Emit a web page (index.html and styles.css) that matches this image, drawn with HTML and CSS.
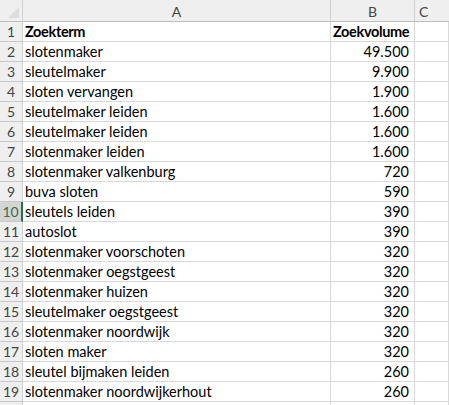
FILE: index.html
```html
<!DOCTYPE html>
<html>
<head>
<meta charset="utf-8">
<link rel="stylesheet" href="styles.css">
</head>
<body>
<div class="sheet">
  <div class="hd corner"><span class="tri"></span></div>
  <div class="hd col">A</div>
  <div class="hd col">B</div>
  <div class="hd col colc">C</div>

  <div class="hd row">1</div><div class="c b">Zoekterm</div><div class="c b">Zoekvolume</div><div class="c e"></div>
  <div class="hd row">2</div><div class="c">slotenmaker</div><div class="c n">49.500</div><div class="c e"></div>
  <div class="hd row">3</div><div class="c">sleutelmaker</div><div class="c n">9.900</div><div class="c e"></div>
  <div class="hd row">4</div><div class="c">sloten vervangen</div><div class="c n">1.900</div><div class="c e"></div>
  <div class="hd row">5</div><div class="c">sleutelmaker leiden</div><div class="c n">1.600</div><div class="c e"></div>
  <div class="hd row">6</div><div class="c">sleutelmaker leiden</div><div class="c n">1.600</div><div class="c e"></div>
  <div class="hd row">7</div><div class="c">slotenmaker leiden</div><div class="c n">1.600</div><div class="c e"></div>
  <div class="hd row">8</div><div class="c">slotenmaker valkenburg</div><div class="c n">720</div><div class="c e"></div>
  <div class="hd row">9</div><div class="c">buva sloten</div><div class="c n">590</div><div class="c e"></div>
  <div class="hd row sel">10</div><div class="c">sleutels leiden</div><div class="c n">390</div><div class="c e"></div>
  <div class="hd row">11</div><div class="c">autoslot</div><div class="c n">390</div><div class="c e"></div>
  <div class="hd row">12</div><div class="c">slotenmaker voorschoten</div><div class="c n">320</div><div class="c e"></div>
  <div class="hd row">13</div><div class="c">slotenmaker oegstgeest</div><div class="c n">320</div><div class="c e"></div>
  <div class="hd row">14</div><div class="c">slotenmaker huizen</div><div class="c n">320</div><div class="c e"></div>
  <div class="hd row">15</div><div class="c">sleutelmaker oegstgeest</div><div class="c n">320</div><div class="c e"></div>
  <div class="hd row">16</div><div class="c">slotenmaker noordwijk</div><div class="c n">320</div><div class="c e"></div>
  <div class="hd row">17</div><div class="c">sloten maker</div><div class="c n">320</div><div class="c e"></div>
  <div class="hd row">18</div><div class="c">sleutel bijmaken leiden</div><div class="c n">260</div><div class="c e"></div>
  <div class="hd row">19</div><div class="c">slotenmaker noordwijkerhout</div><div class="c n">260</div><div class="c e"></div>
  <div class="hd row"></div><div class="c"></div><div class="c n"></div><div class="c e"></div>
</div>
</body>
</html>
```
FILE: styles.css
```css
* { box-sizing: border-box; }
html, body { margin: 0; padding: 0; background: #fff; overflow: hidden; }
body { width: 449px; height: 405px; }
.sheet {
  display: grid;
  grid-template-columns: 23px 308px 84px 34px;
  grid-auto-rows: 20px;
  grid-template-rows: 22px;
  font-family: Lato, "Liberation Sans", sans-serif;
  font-size: 14.5px;
  color: #000;
  width: 449px;
}
.hd {
  background: #efefef;
  color: #444;
  border-right: 1px solid #d0d0d0;
  border-bottom: 1px solid #c8c8c8;
  display: flex;
  align-items: center;
  justify-content: center;
  font-size: 14px;
}
.corner { position: relative; border-bottom: 1px solid #bdbdbd; }
.tri {
  position: absolute;
  right: 3px;
  bottom: 3px;
  width: 0; height: 0;
  border-left: 11px solid transparent;
  border-bottom: 11px solid #dcdcdc;
}
.col { border-bottom: 1px solid #bdbdbd; padding-top: 1px; }
.colc { justify-content: flex-start; padding-left: 4px; border-right: none; }
.row { justify-content: center; }
.row.sel { background: #d5d5d5; color: #3b6e4e; border-right: 2px solid #217346; }
.c {
  border-right: 1px solid #d9d9d9;
  border-bottom: 1px solid #d9d9d9;
  padding: 0 3px 0 2px;
  display: flex;
  align-items: center;
  white-space: nowrap;
  overflow: hidden;
}
.b { font-weight: bold; letter-spacing: -0.35px; }
.n { justify-content: flex-end; padding-right: 5px; }
```
